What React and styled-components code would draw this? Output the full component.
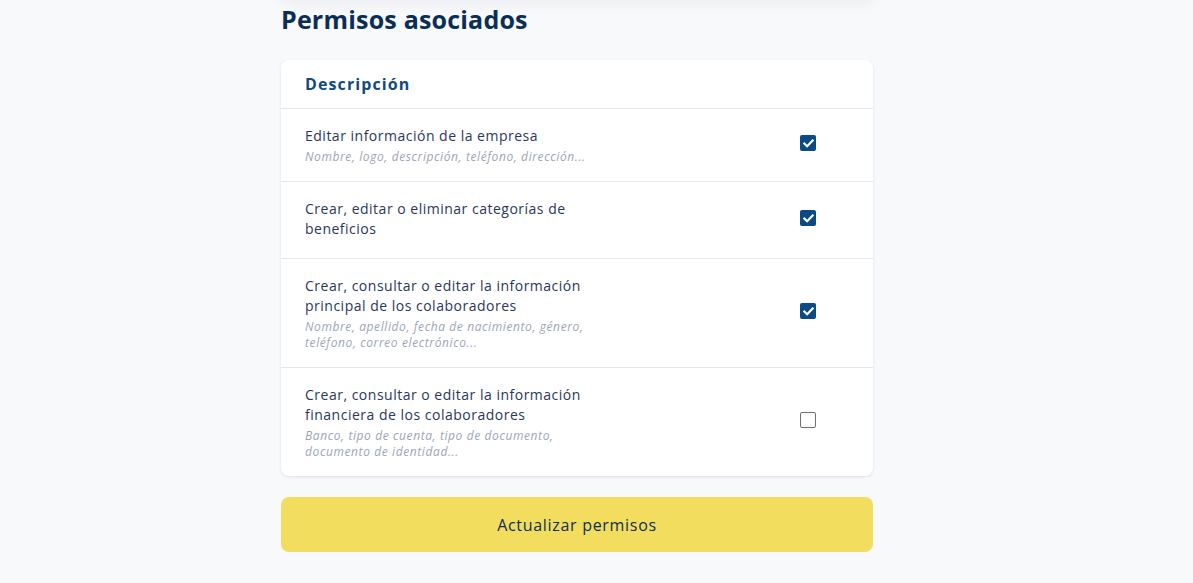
import React, { useState } from "react";
import styled, { createGlobalStyle } from "styled-components";

const GlobalStyle = createGlobalStyle`
  html, body {
    margin: 0;
    padding: 0;
    background-color: #f8f9fb;
    font-family: "Open Sans", "Noto Sans", sans-serif;
  }
`;

const Page = styled.div`
  padding: 0 0 30px 281px;
  overflow: hidden;
`;

const Column = styled.div`
  width: 592px;
`;

const PreviousCard = styled.div`
  height: 40px;
  margin-top: -42px;
  background-color: #fff;
  border-radius: 8px;
  box-shadow: 0px 4px 16px rgba(20, 30, 60, 0.07);
`;

const Title = styled.h2`
  margin: 0;
  padding-top: 5px;
  font-size: 25px;
  line-height: 32px;
  font-weight: 700;
  color: #0c2e55;
  letter-spacing: 0.2px;
`;

const Card = styled.div`
  margin-top: 25px;
  background-color: #fff;
  border-radius: 8px;
  box-shadow: 0px 1px 3px rgba(30, 50, 90, 0.12);
  overflow: hidden;
`;

const CardHeader = styled.div`
  height: 48px;
  display: flex;
  align-items: center;
  padding: 0 24px;
  border-bottom: 1px solid #e4e7ee;
  font-size: 16px;
  font-weight: 700;
  color: #104a7f;
  letter-spacing: 1.1px;
`;

const Row = styled.div`
  display: grid;
  grid-template-columns: 1fr 130px;
  align-items: center;
  padding: 17px 0 16px 24px;
  border-bottom: ${(p) => (p.$last ? "none" : "1px solid #e4e7ee")};
`;

const TextBlock = styled.div`
  max-width: 292px;
`;

const RowTitle = styled.div`
  font-size: 14px;
  line-height: 20px;
  color: #293859;
  letter-spacing: 0.5px;
`;

const RowSub = styled.div`
  margin-top: 3px;
  font-size: 12px;
  line-height: 16px;
  font-style: italic;
  color: #9da5b8;
  letter-spacing: 0.6px;
`;

const CheckCell = styled.label`
  display: flex;
  justify-content: center;
  padding-bottom: 5px;
  cursor: pointer;
`;

const HiddenInput = styled.input`
  display: none;
`;

const Box = styled.span`
  width: 16px;
  height: 16px;
  box-sizing: border-box;
  border-radius: 2px;
  display: flex;
  align-items: center;
  justify-content: center;
  background-color: ${(p) => (p.$checked ? "#0b4a85" : "#fff")};
  border: ${(p) => (p.$checked ? "none" : "1px solid #6e6e73")};
`;

const Button = styled.button`
  margin-top: 21px;
  width: 100%;
  height: 55px;
  border: none;
  border-radius: 8px;
  background-color: #f2dd5e;
  color: #0d2f55;
  font-family: inherit;
  font-size: 16px;
  font-weight: 500;
  letter-spacing: 0.7px;
  cursor: pointer;
`;

const permisos = [
  {
    title: "Editar información de la empresa",
    sub: "Nombre, logo, descripción, teléfono, dirección...",
    checked: true,
  },
  {
    title: "Crear, editar o eliminar categorías de beneficios",
    sub: "",
    checked: true,
  },
  {
    title: "Crear, consultar o editar la información principal de los colaboradores",
    sub: "Nombre, apellido, fecha de nacimiento, género, teléfono, correo electrónico...",
    checked: true,
  },
  {
    title: "Crear, consultar o editar la información financiera de los colaboradores",
    sub: "Banco, tipo de cuenta, tipo de documento, documento de identidad...",
    checked: false,
  },
];

const CheckMark = () => (
  <svg width="11" height="9" viewBox="0 0 11 9">
    <path
      d="M1.3 4.6 L4.1 7.3 L9.7 1.5"
      fill="none"
      stroke="#fff"
      strokeWidth="2.2"
      strokeLinecap="square"
    />
  </svg>
);

const App = () => {
  const [items, setItems] = useState(permisos);

  const toggle = (i) => {
    setItems(items.map((it, idx) => (idx === i ? { ...it, checked: !it.checked } : it)));
  };

  return (
    <>
      <GlobalStyle />
      <Page>
        <Column>
          <PreviousCard />
          <Title>Permisos asociados</Title>
          <Card>
            <CardHeader>Descripción</CardHeader>
            {items.map((item, i) => (
              <Row key={i} $last={i === items.length - 1}>
                <TextBlock>
                  <RowTitle>{item.title}</RowTitle>
                  <RowSub>{item.sub}</RowSub>
                </TextBlock>
                <CheckCell>
                  <HiddenInput
                    type="checkbox"
                    checked={item.checked}
                    onChange={() => toggle(i)}
                  />
                  <Box $checked={item.checked}>{item.checked && <CheckMark />}</Box>
                </CheckCell>
              </Row>
            ))}
          </Card>
          <Button>Actualizar permisos</Button>
        </Column>
      </Page>
    </>
  );
};

export default App;
